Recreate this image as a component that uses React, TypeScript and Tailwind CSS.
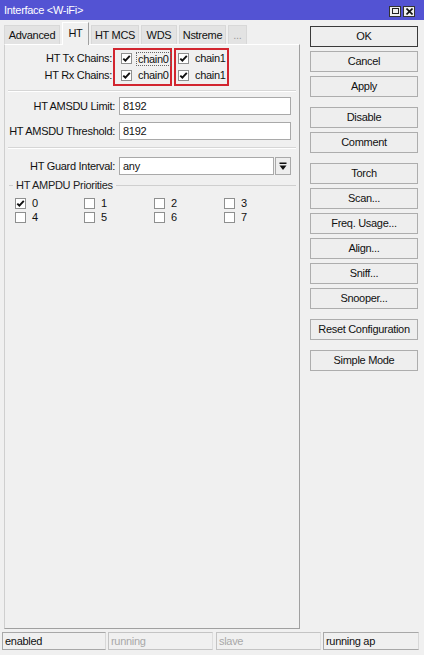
import React from 'react';

const Check = ({ checked }: { checked?: boolean }) => (
  <span className="w-[11px] h-[11px] border border-[#8e8f8f] bg-white flex items-center justify-center shrink-0">
    {checked && (
      <svg width="9" height="9" viewBox="0 0 9 9">
        <path d="M1.3 4.6 L3.4 6.7 L7.8 1.9" stroke="#111" strokeWidth="1.9" fill="none" />
      </svg>
    )}
  </span>
);

const Btn = ({ label, primary }: { label: string; primary?: boolean }) => (
  <div
    className={`h-[21px] flex items-center justify-center bg-[#eeeeee] text-[#111] ${
      primary ? 'border border-[#3a3a3a]' : 'border border-[#adadad]'
    }`}
  >
    {label}
  </div>
);

const Separator = () => <div className="mx-[3px] border-t border-[#d6d6d6] border-b border-b-white" />;

const Field = ({ value, w = 'w-[172px]' }: { value: string; w?: string }) => (
  <div className={`${w} h-[18px] bg-white border border-[#a9a9a9] flex items-center pl-[3px]`}>{value}</div>
);

const Tab = ({ label, w, active, muted }: { label: string; w: string; active?: boolean; muted?: boolean }) =>
  active ? (
    <div
      className={`${w} h-[23px] -mb-px relative z-10 bg-[#f0f0f0] border border-b-0 border-t-white border-l-white border-r-[#a0a0a0] flex items-center justify-center pb-[2px]`}
    >
      {label}
    </div>
  ) : (
    <div
      className={`${w} h-[19px] bg-[#e3e3e3] border border-[#d8d8d8] border-b-0 flex items-center justify-center ${
        muted ? 'text-[#9a9a9a]' : ''
      }`}
    >
      {label}
    </div>
  );

export default function App() {
  const pri = [0, 1, 2, 3, 4, 5, 6, 7];
  return (
    <div
      className="w-[424px] h-[655px] bg-[#f0f0f0] flex flex-col text-[11px] tracking-[-0.3px] text-[#111] overflow-hidden"
      style={{ fontFamily: '"Liberation Sans", Arial, sans-serif' }}
    >
      {/* Title bar */}
      <div className="h-[20px] bg-[#5353d3] flex items-center justify-between pl-[4px] pr-[9px] shrink-0">
        <span className="text-white text-[11px]">Interface &lt;W-iFi&gt;</span>
        <div className="flex gap-[2px] mt-[2px]">
          <div className="w-[12px] h-[11px] bg-[#eeeeee] border border-[#333] flex items-center justify-center">
            <div className="w-[7px] h-[6px] border border-[#222]" />
          </div>
          <div className="w-[12px] h-[11px] bg-[#eeeeee] border border-[#333] flex items-center justify-center">
            <svg width="7" height="7" viewBox="0 0 7 7">
              <path d="M0.5 0.5 L6.5 6.5 M6.5 0.5 L0.5 6.5" stroke="#111" strokeWidth="1.6" />
            </svg>
          </div>
        </div>
      </div>

      {/* Body */}
      <div className="flex-1 flex min-h-0">
        <div className="ml-[4px] w-[296px] flex flex-col">
          <div className="h-[24px] flex items-end gap-[2px] shrink-0">
            <Tab label="Advanced" w="w-[56px]" />
            <Tab label="HT" w="w-[27px]" active />
            <Tab label="HT MCS" w="w-[48px]" />
            <Tab label="WDS" w="w-[36px]" />
            <Tab label="Nstreme" w="w-[47px]" />
            <Tab label="..." w="w-[19px]" muted />
          </div>

          <div className="flex-1 border border-t-white border-l-[#cfcfcf] border-r-[#a0a0a0] border-b-[#a0a0a0] flex flex-col">
            {/* Chains */}
            <div className="flex mt-[3px] h-[38px]">
              <div className="w-[107px] flex flex-col pt-[2px] text-right">
                <div className="h-[17px] flex items-center justify-end">HT Tx Chains:</div>
                <div className="h-[17px] flex items-center justify-end">HT Rx Chains:</div>
              </div>
              <div className="ml-px w-[59px] h-[38px] border-2 border-[#d2252f] flex flex-col pl-[6px]">
                <div className="h-[17px] flex items-center gap-[5px]">
                  <Check checked />
                  <span className="outline outline-1 outline-dotted outline-[#666] px-px leading-[12px]">chain0</span>
                </div>
                <div className="h-[17px] flex items-center gap-[6px]">
                  <Check checked />
                  <span>chain0</span>
                </div>
              </div>
              <div className="ml-[2px] w-[55px] h-[38px] border-2 border-[#d2252f] flex flex-col pl-[2px]">
                <div className="h-[17px] flex items-center gap-[6px]">
                  <Check checked />
                  <span>chain1</span>
                </div>
                <div className="h-[17px] flex items-center gap-[6px]">
                  <Check checked />
                  <span>chain1</span>
                </div>
              </div>
            </div>

            <div className="mt-[4px]">
              <Separator />
            </div>

            <div className="flex items-center mt-[5px]">
              <div className="w-[111px] text-right pr-px">HT AMSDU Limit:</div>
              <div className="ml-[3px]">
                <Field value="8192" />
              </div>
            </div>
            <div className="flex items-center mt-[7px]">
              <div className="w-[111px] text-right pr-px">HT AMSDU Threshold:</div>
              <div className="ml-[3px]">
                <Field value="8192" />
              </div>
            </div>

            <div className="mt-[7px]">
              <Separator />
            </div>

            <div className="flex items-center mt-[8px]">
              <div className="w-[111px] text-right pr-px">HT Guard Interval:</div>
              <div className="ml-[3px] flex">
                <Field value="any" w="w-[155px]" />
                <div className="ml-px w-[16px] h-[18px] border border-[#a9a9a9] bg-[#eeeeee] flex items-center justify-center">
                  <svg width="8" height="9" viewBox="0 0 8 9">
                    <rect x="0.5" y="0.5" width="7" height="1.5" fill="#111" />
                    <path d="M0.5 3.5 L7.5 3.5 L4 8 Z" fill="#111" />
                  </svg>
                </div>
              </div>
            </div>

            {/* AMPDU group */}
            <div className="flex items-center mt-[4px] h-[12px] pl-[4px] pr-[3px]">
              <div className="w-[4px] border-t border-[#cfcfcf]" />
              <span className="px-[3px] text-[#222]">HT AMPDU Priorities</span>
              <div className="flex-1 border-t border-[#cfcfcf]" />
            </div>
            <div className="grid grid-cols-[69px_70px_70px_70px] pl-[10px] mt-[5px]">
              {pri.map((p) => (
                <div key={p} className="h-[14px] flex items-center gap-[6px]">
                  <Check checked={p === 0} />
                  <span>{p}</span>
                </div>
              ))}
            </div>
          </div>
        </div>

        {/* Right buttons */}
        <div className="ml-[10px] w-[108px] pt-[6px] flex flex-col gap-[4px]">
          <Btn label="OK" primary />
          <Btn label="Cancel" />
          <Btn label="Apply" />
          <div className="mt-[6px]">
            <Btn label="Disable" />
          </div>
          <Btn label="Comment" />
          <div className="mt-[6px]">
            <Btn label="Torch" />
          </div>
          <Btn label="Scan..." />
          <Btn label="Freq. Usage..." />
          <Btn label="Align..." />
          <Btn label="Sniff..." />
          <Btn label="Snooper..." />
          <div className="mt-[6px]">
            <Btn label="Reset Configuration" />
          </div>
          <div className="mt-[6px]">
            <Btn label="Simple Mode" />
          </div>
        </div>
      </div>

      {/* Status bar */}
      <div className="h-[18px] mt-[3px] mb-[5px] flex shrink-0 pl-[2px]">
        <div className="w-[104px] border border-[#a8a8a8] border-r-[#d8d8d8] flex items-center pl-[2px]">enabled</div>
        <div className="ml-[2px] w-[105px] border border-[#c4c4c4] border-r-[#dedede] flex items-center pl-[2px] text-[#a8a8a8]">
          running
        </div>
        <div className="ml-[3px] w-[105px] border border-[#c4c4c4] border-r-[#dedede] flex items-center pl-[2px] text-[#a8a8a8]">
          slave
        </div>
        <div className="ml-[2px] w-[96px] border border-[#a8a8a8] border-r-[#d8d8d8] flex items-center pl-[2px]">running ap</div>
      </div>
    </div>
  );
}
